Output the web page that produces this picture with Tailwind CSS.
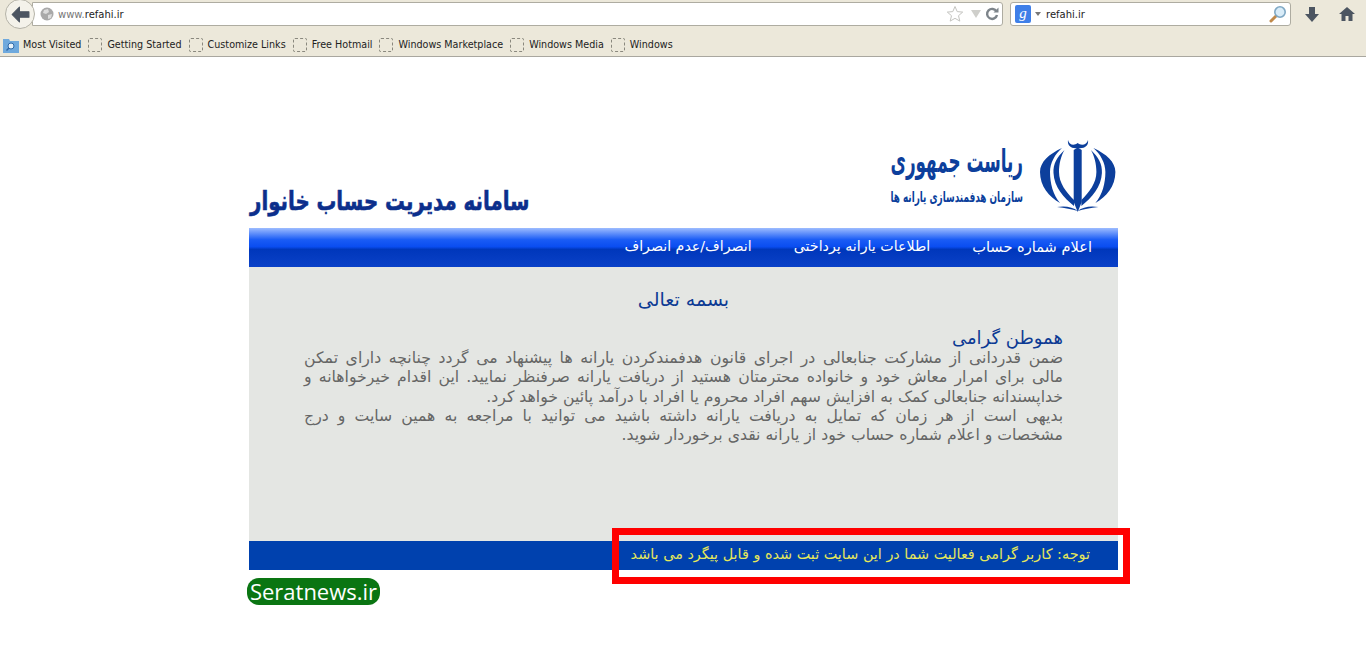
<!DOCTYPE html>
<html lang="fa">
<head>
    <meta charset="UTF-8">
    <title>refahi.ir</title>
    <script src="https://cdn.jsdelivr.net/npm/@tailwindcss/browser@4"></script>
</head>
<body class="bg-white h-[656px] overflow-hidden font-['Liberation_Sans',sans-serif]">
    <!-- browser chrome -->
    <div class="h-[57px] bg-[#ece8da] border-b border-[#a9a79f] font-['DejaVu_Sans',sans-serif] text-[10px] text-[#222]">
        <div class="h-[28px] flex items-center pl-[5px] pr-[11px]">
            <div class="relative z-10 w-[30px] h-[30px] rounded-full bg-[#f4f2ea] border border-[#b5b3a8] flex items-center justify-center">
                <svg class="w-[19px] h-[17px]" viewBox="0 0 18 16"><path d="M8 1 L1 8 L8 15 L8 10.5 L17 10.5 L17 5.5 L8 5.5 Z" fill="#4c5561" stroke="#4c5561" stroke-linejoin="round"/></svg>
            </div>
            <div class="flex-1 -ml-[3px] h-[24px] bg-white border border-[#aeaca1] rounded-r-[3px] flex items-center pl-[7px] pr-[3px]">
                <svg class="w-[14px] h-[14px] mr-[4px]" viewBox="0 0 14 14"><circle cx="7" cy="7" r="6.5" fill="#a9a9a9"/><path d="M4 3 L8 2 L9 5 L6 7 L3 6 Z M8 8 L12 7 L11 11 L8 12 Z" fill="#dcdcdc"/></svg>
                <span class="text-[#777] pt-[1px]">www.<span class="text-[#222]">refahi.ir</span></span>
                <div class="ml-auto flex items-center gap-[4px]">
                    <svg class="w-[18px] h-[18px] mr-[3px]" viewBox="0 0 18 18"><path d="M9 1.5 L11.2 6.6 L16.7 7.1 L12.5 10.7 L13.8 16.1 L9 13.3 L4.2 16.1 L5.5 10.7 L1.3 7.1 L6.8 6.6 Z" fill="#fff" stroke="#c4c4c0"/></svg>
                    <svg class="w-[10px] h-[8px]" viewBox="0 0 10 8"><path d="M0 0 H10 L5 8 Z" fill="#cfcfcb"/></svg>
                    <svg class="w-[14px] h-[14px]" viewBox="0 0 14 14"><path d="M11.5 4.5 A5 5 0 1 0 12 8" fill="none" stroke="#7d848a" stroke-width="2.4"/><path d="M8.5 5.5 H13.5 V0.5 Z" fill="#7d848a"/></svg>
                </div>
            </div>
            <div class="w-[281px] ml-[7px] h-[24px] bg-white border border-[#aeaca1] rounded-[3px] flex items-center pl-[4px] pr-[3px]">
                <div class="w-[16px] h-[18px] rounded-[2px] bg-[#3f7fe8] text-white text-[15px] leading-[16px] text-center italic font-['Liberation_Serif',serif]">g</div>
                <svg class="w-[6px] h-[4px] ml-[4px] mr-[5px]" viewBox="0 0 6 4"><path d="M0 0 H6 L3 4 Z" fill="#777"/></svg>
                <span class="pt-[1px]">refahi.ir</span>
                <svg class="ml-auto w-[18px] h-[18px]" viewBox="0 0 18 18"><path d="M2 16 L7 11" stroke="#c0894a" stroke-width="3" stroke-linecap="round"/><circle cx="11" cy="7" r="5.2" fill="#d9ecf8" stroke="#7fa8c4" stroke-width="1.6"/></svg>
            </div>
            <svg class="w-[14px] h-[15px] ml-[14px]" viewBox="0 0 14 15"><path d="M4 0 H10 V7 H14 L7 15 L0 7 H4 Z" fill="#4c5561"/></svg>
            <svg class="w-[16px] h-[14px] ml-[20px]" viewBox="0 0 16 14"><path d="M8 0 L16 7 H13.5 V14 H9.5 V9 H6.5 V14 H2.5 V7 H0 Z" fill="#4c5561"/></svg>
        </div>
        <div class="h-[28px] pt-[6px] flex items-center pl-[3px] text-[9.6px]">
            <div class="flex items-center mr-[7px]">
                <svg class="w-[16px] h-[15px] mr-[4px]" viewBox="0 0 16 15"><path d="M0 1 H6 L7 3 H16 V15 H0 Z" fill="#6fa9dd"/><circle cx="8" cy="8" r="3" fill="#e6f2fb" stroke="#2f69a8"/><path d="M6 10 L3.5 12.5" stroke="#2f69a8" stroke-width="1.5"/></svg>
                <span>Most Visited</span>
            </div>
            <div class="flex items-center mr-[7px]"><div class="w-[14px] h-[14px] rounded-[2px] border border-dashed border-[#8a887e] mr-[5px]"></div><span>Getting Started</span></div>
            <div class="flex items-center mr-[7px]"><div class="w-[14px] h-[14px] rounded-[2px] border border-dashed border-[#8a887e] mr-[5px]"></div><span>Customize Links</span></div>
            <div class="flex items-center mr-[7px]"><div class="w-[14px] h-[14px] rounded-[2px] border border-dashed border-[#8a887e] mr-[5px]"></div><span>Free Hotmail</span></div>
            <div class="flex items-center mr-[7px]"><div class="w-[14px] h-[14px] rounded-[2px] border border-dashed border-[#8a887e] mr-[5px]"></div><span>Windows Marketplace</span></div>
            <div class="flex items-center mr-[7px]"><div class="w-[14px] h-[14px] rounded-[2px] border border-dashed border-[#8a887e] mr-[5px]"></div><span>Windows Media</span></div>
            <div class="flex items-center"><div class="w-[14px] h-[14px] rounded-[2px] border border-dashed border-[#8a887e] mr-[5px]"></div><span>Windows</span></div>
        </div>
    </div>

    <!-- page -->
    <div dir="rtl" class="relative w-[869px] ml-[249px] font-['DejaVu_Sans',sans-serif]">
        <header class="h-[171px] flex items-end justify-between pr-[1px] pl-[1px]">
            <div class="flex items-end gap-[17px] mb-[15px]">
                <svg class="w-[77px] h-[73px] shrink-0" viewBox="0 0 77 73" fill="#0c3f9c">
                    <path d="M22 8 C9 14 0 22 0 32 C0 46 9 57 20 63 C13 55 10 43 10 32 C10 23 15 14 22 8 Z"/>
                    <path d="M24.5 10 C17 17 13 24 13.5 33 C14 47 24 58 34 66 L34 60 C26 52 19 43 19 32 C19 24 21 16 24.5 10 Z"/>
                    <path d="M17 67 C25 65.5 33 67 37.7 71 C32 69 25 68 17 67 Z"/>
                    <g transform="matrix(-1 0 0 1 75.4 0)">
                        <path d="M22 8 C9 14 0 22 0 32 C0 46 9 57 20 63 C13 55 10 43 10 32 C10 23 15 14 22 8 Z"/>
                        <path d="M24.5 10 C17 17 13 24 13.5 33 C14 47 24 58 34 66 L34 60 C26 52 19 43 19 32 C19 24 21 16 24.5 10 Z"/>
                        <path d="M17 67 C25 65.5 33 67 37.7 71 C32 69 25 68 17 67 Z"/>
                    </g>
                    <path d="M33.7 10 L37.7 7.5 L41.7 10 V62 L37.7 72 L33.7 62 Z"/>
                    <path d="M28 0 C29 5 34 6 37.7 3 C41 6 47 5 48 0 C49 6 44 9 37.7 8 C32 9 27 6 28 0 Z"/>
                </svg>
                <div class="w-[132px] text-[#0c3f9c] mb-[5px]">
                    <div class="text-[32px] leading-[38px] font-bold whitespace-nowrap origin-right scale-x-[0.525] mb-[6px]">ریاست جمهوری</div>
                    <div class="text-[15px] leading-[22px] font-bold whitespace-nowrap origin-right scale-x-[0.59]">سازمان هدفمندسازی یارانه ها</div>
                </div>
            </div>
            <h1 class="text-[26px] leading-[34px] font-bold text-[#0c2f8c] mb-[10px] whitespace-nowrap origin-left scale-x-[0.76] [-webkit-text-stroke:0.6px_#0c2f8c]">سامانه مدیریت حساب خانوار</h1>
        </header>

        <nav class="h-[39px] flex items-center pr-[26px] pb-[2px] gap-[42px] text-white text-[14.2px] bg-[linear-gradient(to_bottom,#9dbcff_0%,#1a5cf5_30%,#0a4df0_48%,#0037bb_55%,#0a41c8_100%)]">
            <a class="text-[14.6px]">اعلام شماره حساب</a>
            <a>اطلاعات یارانه پرداختی</a>
            <a>انصراف/عدم انصراف</a>
        </nav>

        <main class="h-[274px] bg-[#e4e6e3] px-[55px] pt-[21px]">
            <h2 class="text-center text-[19px] leading-[22px] text-[#0c3a94]">بسمه تعالی</h2>
            <h3 class="mt-[16px] text-[18px] leading-[24px] text-[#0c3a94]">هموطن گرامی</h3>
            <div class="text-[15.7px] leading-[19.25px] text-[#666] -mt-[2px]">
                <p class="[text-align-last:justify] whitespace-nowrap">ضمن قدردانی از مشارکت جنابعالی در اجرای قانون هدفمندکردن یارانه ها پیشنهاد می گردد چنانچه دارای تمکن</p>
                <p class="[text-align-last:justify] whitespace-nowrap">مالی برای امرار معاش خود و خانواده محترمتان هستید از دریافت یارانه صرفنظر نمایید. این اقدام خیرخواهانه و</p>
                <p>خداپسندانه جنابعالی کمک به افزایش سهم افراد محروم یا افراد با درآمد پائین خواهد کرد.</p>
                <p class="[text-align-last:justify] whitespace-nowrap">بدیهی است از هر زمان که تمایل به دریافت یارانه داشته باشید می توانید با مراجعه به همین سایت و درج</p>
                <p>مشخصات و اعلام شماره حساب خود از یارانه نقدی برخوردار شوید.</p>
            </div>
        </main>

        <footer class="h-[29px] bg-[#0041ae] flex items-center pr-[28px] pb-[1px] text-[14.4px] text-[#e6e85a]">
            توجه: کاربر گرامی فعالیت شما در این سایت ثبت شده و قابل پیگرد می باشد
        </footer>

        <!-- red annotation box drawn over the screenshot -->
        <div class="absolute top-[471px] left-[363px] w-[518px] h-[56px] border-[7px] border-[#ff0000]"></div>

        <div dir="ltr" class="absolute top-[521px] left-[-2px] w-[133px] h-[27px] rounded-[12px] bg-[#0a7512] text-white text-[22px] font-medium leading-[27px] text-center whitespace-nowrap font-['Open_Sans',sans-serif]">Seratnews.ir</div>
    </div>
</body>
</html>
